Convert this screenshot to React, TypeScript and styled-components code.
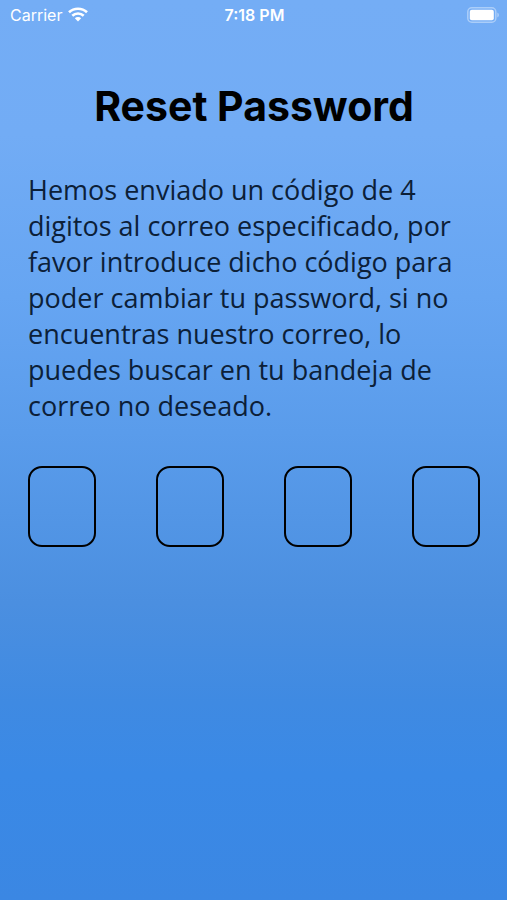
import React from 'react';
import styled, { createGlobalStyle } from 'styled-components';

const GlobalStyle = createGlobalStyle`
  * { box-sizing: border-box; }
  body { margin: 0; background: #3a89e5; }
`;

const Screen = styled.div`
  min-height: 100vh;
  display: flex;
  flex-direction: column;
  background: linear-gradient(180deg, #74adf5 0%, #72acf5 15%, #66a5f2 33%, #5a9ceb 48%, #4b8fe0 67%, #3f8ae2 78%, #3a89e6 86%, #3b87e3 100%);
  color: #000;
`;

const StatusBar = styled.header`
  display: grid;
  grid-template-columns: 1fr auto 1fr;
  align-items: center;
  height: 29px;
  padding: 0 8px 0 10px;
  color: #fff;
  font-family: Inter, sans-serif;
  font-size: 16px;
`;

const Carrier = styled.div`
  display: flex;
  align-items: center;
  gap: 6px;
`;

const Clock = styled.time`
  font-weight: 600;
`;

const Battery = styled.svg`
  justify-self: end;
`;

const Content = styled.main`
  padding: 0 27px 0 28px;
`;

const Title = styled.h1`
  margin: 50px 0 0;
  font-family: Inter, sans-serif;
  font-size: 41px;
  line-height: 54px;
  font-weight: 700;
  text-align: center;
`;

const Message = styled.p`
  margin: 39px 0 0;
  font-family: "Open Sans", sans-serif;
  font-size: 27px;
  line-height: 36px;
  color: #0c2038;
`;

const CodeFields = styled.form`
  display: flex;
  justify-content: space-between;
  margin-top: 42px;
`;

const DigitInput = styled.input`
  width: 68px;
  height: 81px;
  padding: 0;
  border: 2px solid #000;
  border-radius: 14px;
  background: transparent;
  font-family: "Open Sans", sans-serif;
  font-size: 32px;
  text-align: center;
`;

export default function App() {
  return (
    <Screen>
      <GlobalStyle />
      <StatusBar>
        <Carrier>
          Carrier
          <svg width="20" height="15" viewBox="0 0 20 15" fill="none" stroke="#fff" strokeWidth="2.6" aria-hidden="true">
            <path d="M1 5.3a13 13 0 0 1 18 0" />
            <path d="M4.3 8.8a8.2 8.2 0 0 1 11.4 0" />
            <path d="M10 14.5 6.8 11.2a4.6 4.6 0 0 1 6.4 0Z" fill="#fff" stroke="none" />
          </svg>
        </Carrier>
        <Clock>7:18 PM</Clock>
        <Battery width="32" height="16" viewBox="0 0 32 16" role="img" aria-label="Battery">
          <rect x="0.8" y="0.8" width="28" height="14.4" rx="4" fill="none" stroke="#fff" strokeWidth="1.5" strokeOpacity="0.4" />
          <rect x="2.8" y="2.8" width="24" height="10.4" rx="2" fill="#fff" />
          <path d="M30.3 5.5v5q1.7-.7 1.7-2.5t-1.7-2.5Z" fill="#fff" fillOpacity="0.4" />
        </Battery>
      </StatusBar>
      <Content>
        <Title>Reset Password</Title>
        <Message>
          Hemos enviado un código de 4 digitos al correo especificado, por favor introduce dicho código para poder cambiar tu password, si no encuentras nuestro correo, lo puedes buscar en tu bandeja de correo no deseado.
        </Message>
        <CodeFields>
          {[1, 2, 3, 4].map((n) => (
            <DigitInput key={n} type="text" inputMode="numeric" maxLength={1} aria-label={`Dígito ${n}`} />
          ))}
        </CodeFields>
      </Content>
    </Screen>
  );
}
